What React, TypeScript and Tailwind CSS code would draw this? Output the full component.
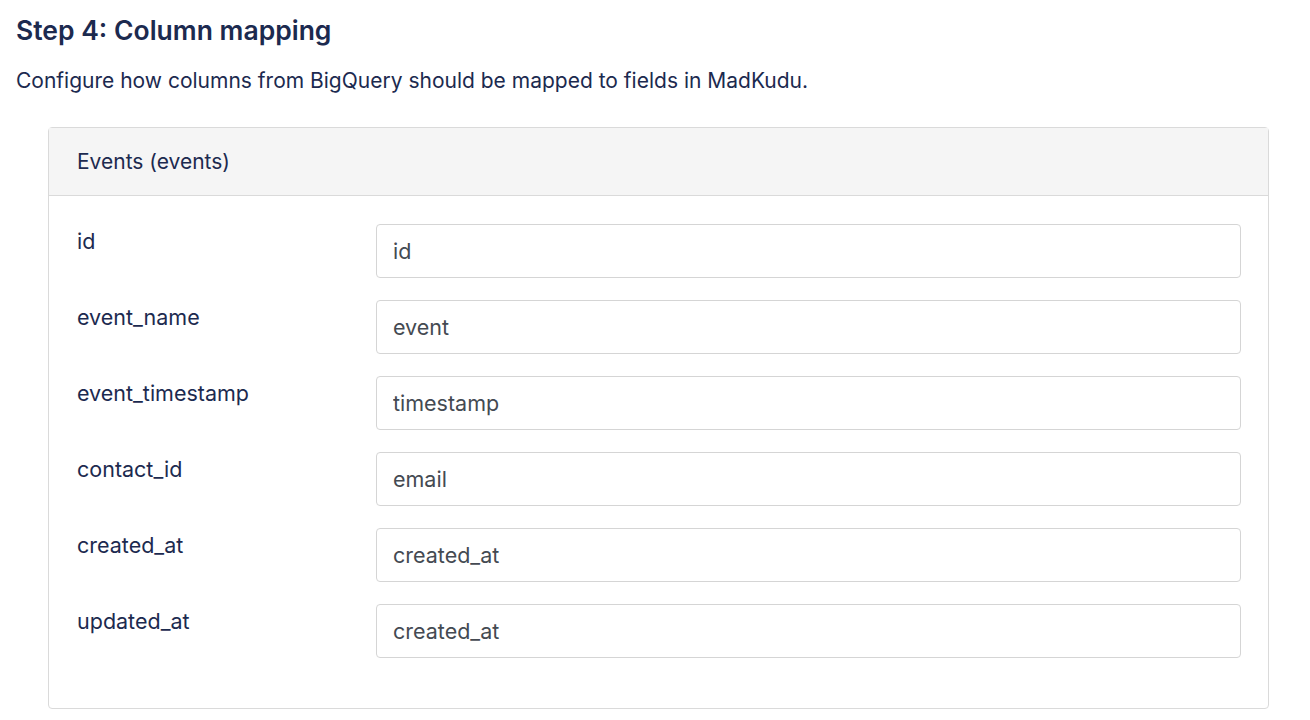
const rows: { label: string; value: string }[] = [
  { label: 'id', value: 'id' },
  { label: 'event_name', value: 'event' },
  { label: 'event_timestamp', value: 'timestamp' },
  { label: 'contact_id', value: 'email' },
  { label: 'created_at', value: 'created_at' },
  { label: 'updated_at', value: 'created_at' },
];

export default function App() {
  return (
    <div
      className="min-h-screen bg-white px-4 pt-[12px] text-[#1c2a4f]"
      style={{ fontFamily: 'Inter, "Noto Sans", sans-serif' }}
    >
      <h2 className="text-[26.5px] font-semibold leading-[36px]">Step 4: Column mapping</h2>
      <p className="mt-[18px] text-[21px] leading-[30px]">
        Configure how columns from BigQuery should be mapped to fields in MadKudu.
      </p>

      <div className="ml-8 mr-[25px] mt-[31px] rounded border border-[#dadada]">
        <div className="flex h-[68px] items-center border-b border-[#dadada] bg-[#f5f5f5] px-7 text-[21px]">
          Events (events)
        </div>
        <div className="flex flex-col gap-[22px] pb-[50px] pl-7 pr-[27px] pt-[28px]">
          {rows.map((r) => (
            <div key={r.label} className="flex items-start">
              <label className="w-[299px] shrink-0 pt-[2px] text-[21.5px] leading-[30px]">{r.label}</label>
              <input
                readOnly
                value={r.value}
                className="h-[54px] flex-1 rounded border border-[#d5d5d5] bg-white px-4 text-[21.5px] text-[#444a52] outline-none"
                style={{ fontFamily: 'inherit' }}
              />
            </div>
          ))}
        </div>
      </div>
    </div>
  );
}
